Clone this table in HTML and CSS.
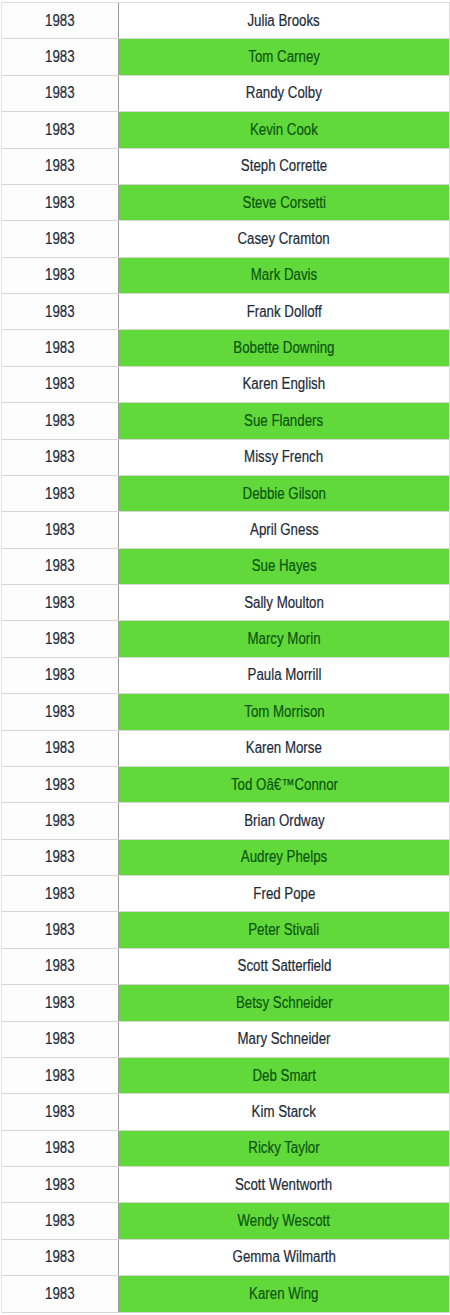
FILE: index.html
```html
<!DOCTYPE html>
<html>
<head>
<meta charset="utf-8">
<link rel="stylesheet" href="styles.css">
</head>
<body>
<div class="table">
  <div class="row"><div class="year"><span>1983</span></div><div class="name"><span>Julia Brooks</span></div></div>
  <div class="row alt"><div class="year"><span>1983</span></div><div class="name"><span>Tom Carney</span></div></div>
  <div class="row"><div class="year"><span>1983</span></div><div class="name"><span>Randy Colby</span></div></div>
  <div class="row alt"><div class="year"><span>1983</span></div><div class="name"><span>Kevin Cook</span></div></div>
  <div class="row"><div class="year"><span>1983</span></div><div class="name"><span>Steph Corrette</span></div></div>
  <div class="row alt"><div class="year"><span>1983</span></div><div class="name"><span>Steve Corsetti</span></div></div>
  <div class="row"><div class="year"><span>1983</span></div><div class="name"><span>Casey Cramton</span></div></div>
  <div class="row alt"><div class="year"><span>1983</span></div><div class="name"><span>Mark Davis</span></div></div>
  <div class="row"><div class="year"><span>1983</span></div><div class="name"><span>Frank Dolloff</span></div></div>
  <div class="row alt"><div class="year"><span>1983</span></div><div class="name"><span>Bobette Downing</span></div></div>
  <div class="row"><div class="year"><span>1983</span></div><div class="name"><span>Karen English</span></div></div>
  <div class="row alt"><div class="year"><span>1983</span></div><div class="name"><span>Sue Flanders</span></div></div>
  <div class="row"><div class="year"><span>1983</span></div><div class="name"><span>Missy French</span></div></div>
  <div class="row alt"><div class="year"><span>1983</span></div><div class="name"><span>Debbie Gilson</span></div></div>
  <div class="row"><div class="year"><span>1983</span></div><div class="name"><span>April Gness</span></div></div>
  <div class="row alt"><div class="year"><span>1983</span></div><div class="name"><span>Sue Hayes</span></div></div>
  <div class="row"><div class="year"><span>1983</span></div><div class="name"><span>Sally Moulton</span></div></div>
  <div class="row alt"><div class="year"><span>1983</span></div><div class="name"><span>Marcy Morin</span></div></div>
  <div class="row"><div class="year"><span>1983</span></div><div class="name"><span>Paula Morrill</span></div></div>
  <div class="row alt"><div class="year"><span>1983</span></div><div class="name"><span>Tom Morrison</span></div></div>
  <div class="row"><div class="year"><span>1983</span></div><div class="name"><span>Karen Morse</span></div></div>
  <div class="row alt"><div class="year"><span>1983</span></div><div class="name"><span>Tod Oâ€™Connor</span></div></div>
  <div class="row"><div class="year"><span>1983</span></div><div class="name"><span>Brian Ordway</span></div></div>
  <div class="row alt"><div class="year"><span>1983</span></div><div class="name"><span>Audrey Phelps</span></div></div>
  <div class="row"><div class="year"><span>1983</span></div><div class="name"><span>Fred Pope</span></div></div>
  <div class="row alt"><div class="year"><span>1983</span></div><div class="name"><span>Peter Stivali</span></div></div>
  <div class="row"><div class="year"><span>1983</span></div><div class="name"><span>Scott Satterfield</span></div></div>
  <div class="row alt"><div class="year"><span>1983</span></div><div class="name"><span>Betsy Schneider</span></div></div>
  <div class="row"><div class="year"><span>1983</span></div><div class="name"><span>Mary Schneider</span></div></div>
  <div class="row alt"><div class="year"><span>1983</span></div><div class="name"><span>Deb Smart</span></div></div>
  <div class="row"><div class="year"><span>1983</span></div><div class="name"><span>Kim Starck</span></div></div>
  <div class="row alt"><div class="year"><span>1983</span></div><div class="name"><span>Ricky Taylor</span></div></div>
  <div class="row"><div class="year"><span>1983</span></div><div class="name"><span>Scott Wentworth</span></div></div>
  <div class="row alt"><div class="year"><span>1983</span></div><div class="name"><span>Wendy Wescott</span></div></div>
  <div class="row"><div class="year"><span>1983</span></div><div class="name"><span>Gemma Wilmarth</span></div></div>
  <div class="row alt"><div class="year"><span>1983</span></div><div class="name"><span>Karen Wing</span></div></div>
</div>
</body>
</html>
```
FILE: styles.css
```css
html, body {
  margin: 0;
  padding: 0;
  background: #ffffff;
}

body {
  padding: 2px 2px 0 1px;
  font-family: "Liberation Sans", Arial, sans-serif;
  font-size: 16px;
}

.table {
  width: 447px;
  border-top: 1px solid #dcdcdc;
  border-left: 1px solid #e4e4e4;
  border-right: 1px solid #dcdcdc;
}

.row {
  display: grid;
  grid-template-columns: 117px 1fr;
  height: 36.39px;
  box-sizing: border-box;
  border-bottom: 1px solid #d6d6d6;
}

.year,
.name {
  display: flex;
  align-items: center;
  justify-content: center;
  color: #1c2a38;
}

.year span,
.name span {
  display: inline-block;
  white-space: nowrap;
  transform: scaleX(0.83);
  -webkit-text-stroke: 0.2px currentColor;
}

.year {
  background: #fdfdfd;
  border-right: 1px solid #9a9a9a;
}

.name {
  background: #ffffff;
}

.row.alt .name {
  background: #62d93a;
  color: #0b5512;
}
```
